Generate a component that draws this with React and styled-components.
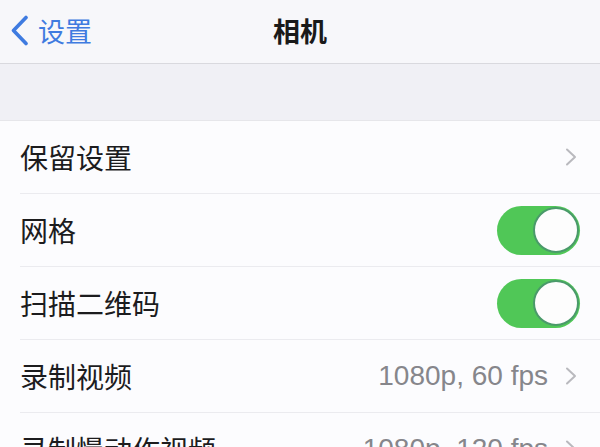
import React from "react";
import styled, { createGlobalStyle } from "styled-components";

const Global = createGlobalStyle`
  body {
    margin: 0;
    font-family: "Liberation Sans", "Noto Sans CJK SC", sans-serif;
    background: #fcfcfe;
  }
`;

const Screen = styled.div`
  width: 600px;
  height: 447px;
  overflow: hidden;
  background: #fcfcfe;
`;

const NavBar = styled.div`
  height: 63px;
  display: grid;
  grid-template-columns: 1fr auto 1fr;
  align-items: center;
  background: #f7f7fa;
  border-bottom: 1px solid #d9d9de;
`;

const Back = styled.div`
  display: flex;
  align-items: center;
  gap: 9px;
  padding-left: 10px;
  color: #3f7be0;
  font-size: 27px;
  padding-bottom: 2px;
`;

const Title = styled.div`
  font-size: 27px;
  font-weight: 700;
  color: #1a1a1a;
  padding-bottom: 2px;
`;

const Spacer = styled.div`
  height: 56px;
  background: #f0f0f5;
  border-bottom: 1px solid #e6e6ea;
`;

const List = styled.div`
  padding-left: 20px;
  background: #fcfcfe;
`;

const Row = styled.div`
  height: 72px;
  display: flex;
  align-items: center;
  justify-content: space-between;
  padding-right: 20px;
  border-bottom: 1px solid #ebebef;
`;

const Label = styled.span`
  font-size: 28px;
  color: #1c1c1e;
`;

const Trail = styled.div`
  display: flex;
  align-items: center;
  gap: 17px;
  padding-right: 3px;
`;

const Value = styled.span`
  font-size: 28px;
  color: #86868b;
`;

const Switch = styled.div`
  width: 83px;
  height: 49px;
  border-radius: 25px;
  background: #50c757;
  display: flex;
  align-items: center;
  justify-content: flex-end;
  box-sizing: border-box;
  padding: 1px;
`;

const Knob = styled.div`
  width: 46px;
  height: 46px;
  border-radius: 50%;
  background: #fdfdfd;
  border: 2px solid #4a9a6a;
  box-sizing: border-box;
`;

const Chevron = () => (
  <svg width="12" height="18" viewBox="0 0 12 18">
    <path d="M2 1.5 L10 9 L2 16.5" fill="none" stroke="#b9b9be" strokeWidth="2" strokeLinecap="round" strokeLinejoin="round" />
  </svg>
);

const rows = [
  { label: "保留设置", type: "link" },
  { label: "网格", type: "switch" },
  { label: "扫描二维码", type: "switch" },
  { label: "录制视频", type: "link", value: "1080p, 60 fps" },
  { label: "录制慢动作视频", type: "link", value: "1080p, 120 fps" },
];

export default function App() {
  return (
    <Screen>
      <Global />
      <NavBar>
        <Back>
          <svg width="19" height="31" viewBox="0 0 19 31">
            <path d="M16 2.5 L3.5 15.5 L16 28.5" fill="none" stroke="#3f7be0" strokeWidth="3.6" strokeLinecap="round" strokeLinejoin="round" />
          </svg>
          <span>设置</span>
        </Back>
        <Title>相机</Title>
        <div />
      </NavBar>
      <Spacer />
      <List>
        {rows.map((r) => (
          <Row key={r.label}>
            <Label>{r.label}</Label>
            {r.type === "switch" ? (
              <Switch>
                <Knob />
              </Switch>
            ) : (
              <Trail>
                {r.value && <Value>{r.value}</Value>}
                <Chevron />
              </Trail>
            )}
          </Row>
        ))}
      </List>
    </Screen>
  );
}
